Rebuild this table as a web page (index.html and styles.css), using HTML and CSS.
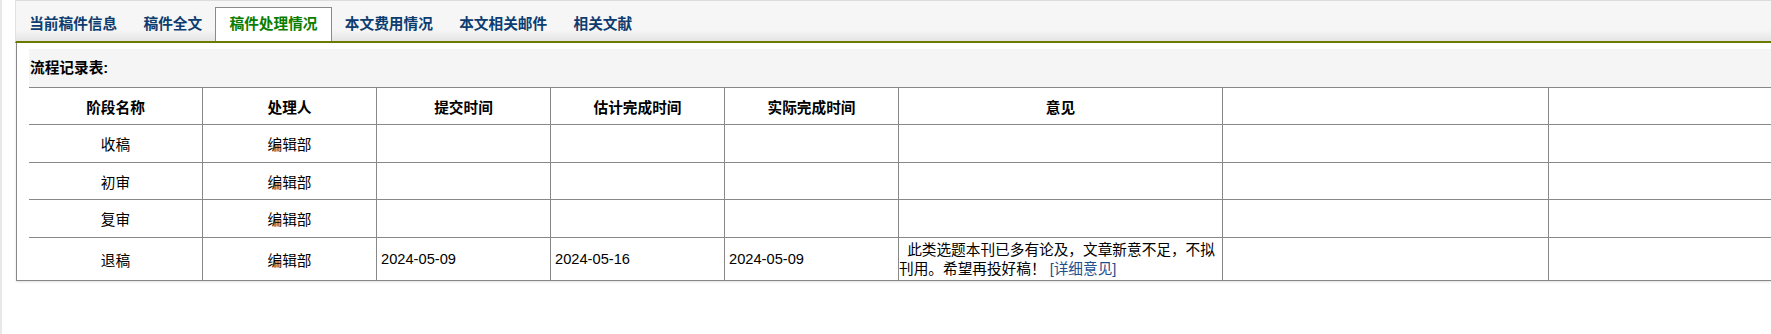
FILE: index.html
```html
<!DOCTYPE html>
<html lang="zh-CN">
<head>
<meta charset="utf-8">
<title>稿件处理情况</title>
<link rel="stylesheet" href="styles.css">
</head>
<body>
<div class="page">
  <div class="tabs">
    <span class="tab">当前稿件信息</span>
    <span class="tab">稿件全文</span>
    <span class="tab active">稿件处理情况</span>
    <span class="tab">本文费用情况</span>
    <span class="tab">本文相关邮件</span>
    <span class="tab">相关文献</span>
  </div>
  <div class="panel">
    <div class="caption">流程记录表:</div>
    <table class="flow">
      <thead>
        <tr class="head">
          <th class="c1">阶段名称</th>
          <th class="c2">处理人</th>
          <th class="c3">提交时间</th>
          <th class="c4">估计完成时间</th>
          <th class="c5">实际完成时间</th>
          <th class="c6">意见</th>
          <th class="c7"></th>
          <th class="c8"></th>
        </tr>
      </thead>
      <tbody>
        <tr class="r38">
          <td>收稿</td><td>编辑部</td><td></td><td></td><td></td><td></td><td></td><td></td>
        </tr>
        <tr class="r37">
          <td>初审</td><td>编辑部</td><td></td><td></td><td></td><td></td><td></td><td></td>
        </tr>
        <tr class="r38">
          <td>复审</td><td>编辑部</td><td></td><td></td><td></td><td></td><td></td><td></td>
        </tr>
        <tr class="last">
          <td>退稿</td><td>编辑部</td>
          <td class="date">2024-05-09</td>
          <td class="date">2024-05-16</td>
          <td class="date">2024-05-09</td>
          <td class="opinion">&nbsp;&nbsp;此类选题本刊已多有论及，文章新意不足，不拟刊用。希望再投好稿！ <a class="more" href="#">[详细意见]</a></td>
          <td></td><td></td>
        </tr>
      </tbody>
    </table>
  </div>
</div>
</body>
</html>
```

FILE: styles.css
```css
html, body {
  margin: 0;
  padding: 0;
  background: #fff;
}

body {
  font-family: "Liberation Sans", "Noto Sans CJK SC", sans-serif;
  font-size: 14.67px;
  color: #000;
}

.page {
  border-left: 2px solid #e8e8e8;
  padding-left: 13px;
  height: 334px;
  box-sizing: border-box;
  overflow: hidden;
}

.tabs {
  display: flex;
  align-items: flex-end;
  height: 34px;
  padding: 6px 0 0 0;
  border-top: 1px solid #dcdcdc;
  border-left: 1px solid #e2e2e2;
  border-bottom: 2px solid #6b7b00;
  background: linear-gradient(to bottom, #f6f6f6 0%, #f6f6f6 72%, #e4e4e4 100%);
}

.tab {
  display: block;
  height: 34px;
  line-height: 34px;
  padding: 0 13.2px;
  font-weight: bold;
  color: #0d3d70;
  white-space: nowrap;
}

.tab.active {
  height: 33px;
  line-height: 33px;
  border: 1px solid #8a8a8a;
  border-bottom: none;
  background: #fff;
  color: #0a7d00;
}

.panel {
  margin-left: 1px;
  border-left: 1px solid #888;
  border-bottom: 1px solid #888;
  padding: 6px 0 0 12px;
  box-shadow: 0 1px 2px rgba(0, 0, 0, 0.12);
}

.caption {
  height: 38px;
  line-height: 38px;
  padding-left: 1px;
  background: #f5f5f5;
  font-weight: bold;
}

.flow {
  border-collapse: separate;
  border-spacing: 0;
  table-layout: fixed;
  width: 1846px;
  border-top: 1px solid #888;
}

.flow th,
.flow td {
  box-sizing: border-box;
  padding: 0;
  border-right: 1px solid #888;
  border-bottom: 1px solid #888;
  text-align: center;
  vertical-align: middle;
  font-size: 14.67px;
}

.flow th {
  font-weight: bold;
}

.c1, .c2, .c3, .c4, .c5 { width: 174px; }
.c6 { width: 324px; }
.c7, .c8 { width: 326px; }

.head th { height: 37px; }
.r38 td { height: 38px; }
.r37 td { height: 37px; }

.last td {
  height: 42px;
  border-bottom: none;
}

.flow td.date {
  text-align: left;
  padding-left: 4px;
}

.flow td.opinion {
  text-align: left;
  line-height: 19.3px;
  padding-top: 2px;
}

.more {
  color: #1f4e8c;
  text-decoration: none;
}
```
